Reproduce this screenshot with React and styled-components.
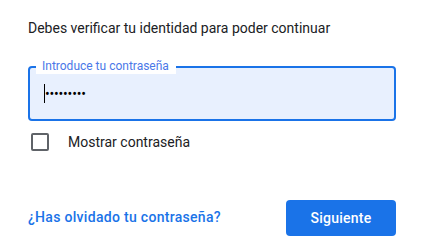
import React from "react";
import styled, { createGlobalStyle } from "styled-components";

const Global = createGlobalStyle`
  html, body { margin: 0; padding: 0; background: #fff; }
  body { font-family: Roboto, "Noto Sans", Arial, sans-serif; -webkit-font-smoothing: antialiased; }
`;

const Page = styled.div`
  width: 368px;
  padding: 18px 28px 0 28px;
`;

const Title = styled.p`
  margin: 0;
  font-size: 14px;
  line-height: 20px;
  color: #202124;
`;

const Field = styled.div`
  position: relative;
  margin-top: 28px;
  height: 55px;
  box-sizing: border-box;
  border: 2px solid #1a73e8;
  border-radius: 4px;
  background: #e8f0fe;
  display: flex;
  align-items: center;
  padding-left: 14px;
`;

const Label = styled.span`
  position: absolute;
  top: -10px;
  left: 6px;
  padding: 0 7px 0 6px;
  background: #fff;
  font-size: 12px;
  line-height: 16px;
  color: #4a78e8;
`;

const Caret = styled.span`
  display: inline-block;
  width: 1px;
  height: 19px;
  background: #000;
`;

const Dots = styled.span`
  font-size: 14px;
  line-height: 20px;
  color: #000;
  letter-spacing: -0.2px;
  margin-top: 1px;
`;

const CheckRow = styled.label`
  display: flex;
  align-items: center;
  margin-top: 11px;
  height: 20px;
  padding-left: 3px;
`;

const Box = styled.span`
  width: 18px;
  height: 18px;
  box-sizing: border-box;
  border: 2px solid #5f6368;
  border-radius: 2px;
`;

const CheckText = styled.span`
  margin-left: 19px;
  font-size: 14px;
  line-height: 20px;
  color: #202124;
`;

const Footer = styled.div`
  margin-top: 48px;
  display: flex;
  align-items: center;
  justify-content: space-between;
`;

const Link = styled.a`
  font-size: 14px;
  font-weight: 500;
  line-height: 20px;
  letter-spacing: 0.3px;
  color: #1a73e8;
  text-decoration: none;
  margin-top: -2px;
`;

const Button = styled.button`
  width: 110px;
  height: 36px;
  border: none;
  border-radius: 4px;
  background: #1a73e8;
  color: #fff;
  font-family: Roboto, "Noto Sans", Arial, sans-serif;
  font-size: 14px;
  font-weight: 500;
  letter-spacing: 0.25px;
  padding: 0;
`;

export default function App() {
  return (
    <>
      <Global />
      <Page>
        <Title>Debes verificar tu identidad para poder continuar</Title>
        <Field>
          <Label>Introduce tu contraseña</Label>
          <Caret />
          <Dots>•••••••••</Dots>
        </Field>
        <CheckRow>
          <Box />
          <CheckText>Mostrar contraseña</CheckText>
        </CheckRow>
        <Footer>
          <Link href="#">¿Has olvidado tu contraseña?</Link>
          <Button>Siguiente</Button>
        </Footer>
      </Page>
    </>
  );
}
